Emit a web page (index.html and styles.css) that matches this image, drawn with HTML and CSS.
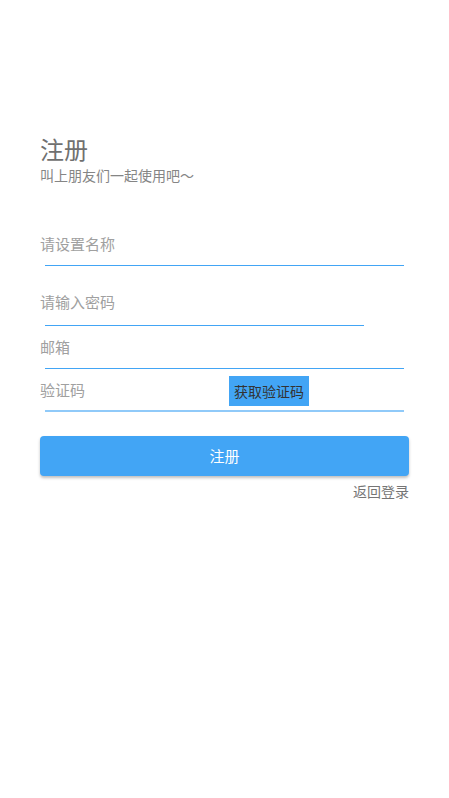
FILE: index.html
```html
<!DOCTYPE html>
<html lang="zh-CN">
<head>
<meta charset="utf-8">
<title>注册</title>
<link rel="stylesheet" href="styles.css">
</head>
<body>
<div class="page">
  <h1 class="title">注册</h1>
  <p class="subtitle">叫上朋友们一起使用吧～</p>

  <div class="fields">
    <div class="field field-name">
      <div class="placeholder">请设置名称</div>
      <div class="line"></div>
    </div>
    <div class="field field-pass">
      <div class="placeholder">请输入密码</div>
      <div class="line line-short"></div>
    </div>
    <div class="field field-mail">
      <div class="placeholder">邮箱</div>
      <div class="line"></div>
    </div>
    <div class="field field-code">
      <div class="code-row">
        <div class="placeholder code-input">验证码</div>
        <div class="code-btn">获取验证码</div>
      </div>
      <div class="line line-thick"></div>
    </div>
  </div>

  <div class="submit">注册</div>
  <div class="back">返回登录</div>
</div>
</body>
</html>
```

FILE: styles.css
```css
html, body {
  margin: 0;
  padding: 0;
  background: #ffffff;
}

body {
  font-family: "Noto Sans CJK SC", "Noto Sans", sans-serif;
}

.page {
  padding: 137px 40px 0 40px;
}

.title {
  margin: 0;
  font-size: 24px;
  line-height: 24px;
  font-weight: 400;
  color: #707070;
}

.subtitle {
  margin: 5px 0 0 0;
  font-size: 14px;
  line-height: 18px;
  color: #858585;
}

.fields {
  margin-top: 49px;
}

.placeholder {
  font-size: 15px;
  line-height: 22px;
  color: #a0a0a0;
}

.line {
  margin: 10px 5px 0 5px;
  height: 1px;
  background: #42a5f5;
}

.line-short {
  margin-right: 45px;
  margin-top: 12px;
}

.field-pass {
  margin-top: 25px;
}

.field-mail {
  margin-top: 10px;
}

.field-code {
  margin-top: 7px;
}

.code-row {
  display: flex;
  align-items: center;
  height: 30px;
}

.code-input {
  width: 189px;
  margin-top: -2px;
}

.code-btn {
  height: 30px;
  line-height: 30px;
  padding: 0 5px;
  background: #42a5f5;
  color: #333333;
  font-size: 14px;
}

.line-thick {
  margin-top: 4px;
  height: 2px;
  background: #90caf9;
}

.submit {
  margin-top: 24px;
  height: 40px;
  line-height: 40px;
  border-radius: 4px;
  background: #42a5f5;
  color: #ffffff;
  font-size: 15px;
  text-align: center;
  box-shadow: 0 2px 3px rgba(0, 0, 0, 0.25);
}

.back {
  margin-top: 5px;
  text-align: right;
  font-size: 14px;
  line-height: 20px;
  color: #757575;
}
```
